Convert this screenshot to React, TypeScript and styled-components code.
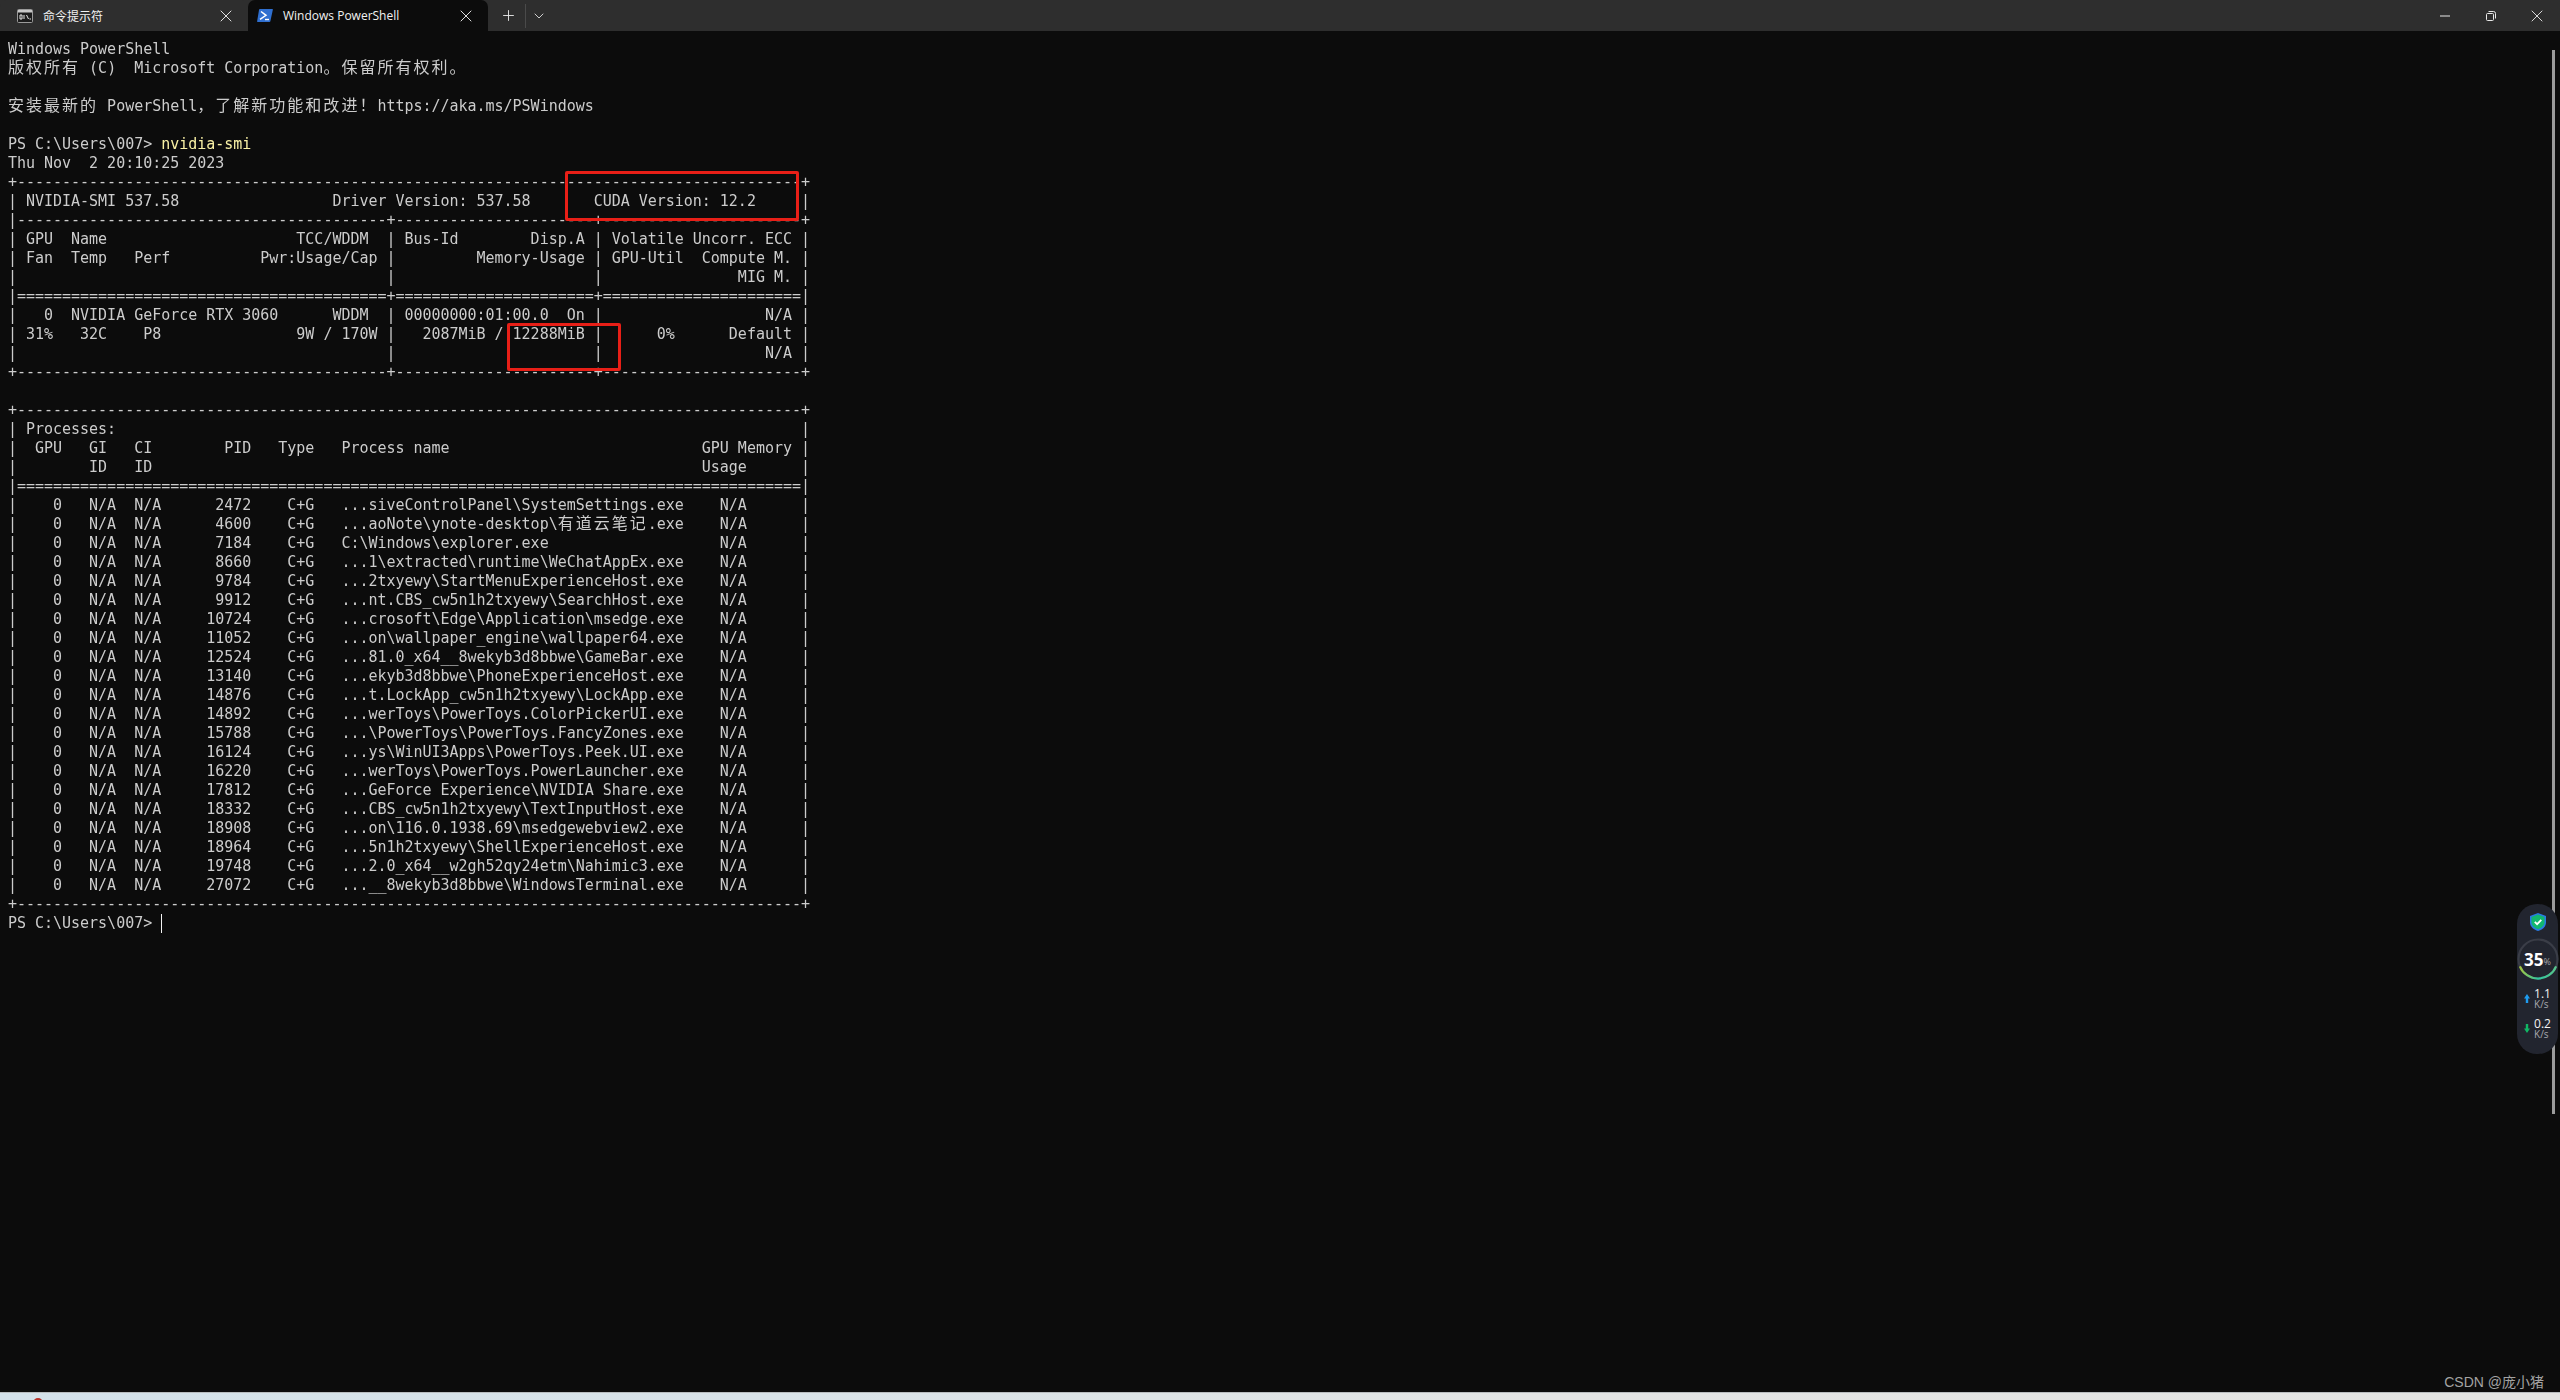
import React from "react";
import styled, { createGlobalStyle } from "styled-components";
import { ChevronDown, Plus, X } from "lucide-react";

const GlobalStyle = createGlobalStyle`
  html, body {
    margin: 0;
    padding: 0;
    background: #0c0c0c;
    overflow: hidden;
  }
`;

const Page = styled.div`
  position: relative;
  width: 2560px;
  height: 1400px;
  display: flex;
  flex-direction: column;
  overflow: hidden;
`;

const TabBar = styled.div`
  height: 31px;
  flex: none;
  display: flex;
  align-items: flex-end;
  background: #2e2e2e;
  font-family: "Open Sans", "Noto Sans CJK SC", sans-serif;
  font-size: 12px;
  color: #f2f2f2;
`;

const Tab = styled.div<{ $active?: boolean }>`
  width: ${(p) => (p.$active ? "240px" : "248px")};
  height: 31px;
  box-sizing: border-box;
  padding: 0 12px 0 ${(p) => (p.$active ? "9px" : "17px")};
  display: flex;
  align-items: center;
  gap: 10px;
  flex: none;
  border-radius: 7px 7px 0 0;
  background: ${(p) => (p.$active ? "#0c0c0c" : "#2e2e2e")};
`;

const TabTitle = styled.span`
  flex: 1;
  white-space: nowrap;
`;

const TabTools = styled.div`
  display: flex;
  align-items: center;
  margin-left: 12px;
  height: 31px;
  color: #e8e8e8;
`;

const ToolDivider = styled.div`
  width: 1px;
  height: 24px;
  margin: 0 5px 0 8px;
  background: #4a4a4a;
`;

const WindowButtons = styled.div`
  margin-left: auto;
  display: flex;
  height: 31px;
  color: #e8e8e8;
`;

const WindowButton = styled.div`
  width: 46px;
  display: flex;
  align-items: center;
  justify-content: center;
`;

const Terminal = styled.pre`
  flex: 1;
  margin: 0;
  padding: 9px 0 0 8px;
  background: #0c0c0c;
  color: #cccccc;
  font-family: "DejaVu Sans Mono", "Noto Sans CJK SC", monospace;
  font-size: 15px;
  line-height: 19px;
  letter-spacing: -0.02px;
  filter: blur(0.35px);
`;

const Line = styled.div`
  height: 19px;
  white-space: pre;
`;

const Wide = styled.span`
  font-family: "Noto Sans CJK SC", sans-serif;
  font-size: 16px;
  line-height: 0;
  letter-spacing: 2.02px;
`;

const Command = styled.span`
  color: #f9f1a5;
`;

const Caret = styled.span`
  display: inline-block;
  width: 1px;
  height: 19px;
  margin-left: 9px;
  vertical-align: top;
  background: #f2f2f2;
`;

const FooterStrip = styled.div`
  height: 8px;
  flex: none;
  position: relative;
  box-sizing: border-box;
  border-top: 1px solid #b9bdbf;
  background: linear-gradient(90deg, #d4e2ea 0%, #d9e3e8 30%, #e3e5e4 60%, #e4e4e2 100%);
`;

const Dot = styled.div`
  position: absolute;
  left: 33px;
  top: 5px;
  width: 10px;
  height: 10px;
  border-radius: 50%;
  background: #b8332b;
`;

const Highlight = styled.div<{ $x: number; $y: number; $w: number; $h: number }>`
  position: absolute;
  left: ${(p) => p.$x}px;
  top: ${(p) => p.$y}px;
  width: ${(p) => p.$w}px;
  height: ${(p) => p.$h}px;
  box-sizing: border-box;
  border: 3px solid #e81f17;
  border-radius: 2px;
`;

const Scrollbar = styled.div`
  position: absolute;
  left: 2552px;
  top: 50px;
  width: 3px;
  height: 1064px;
  background: #9b9b9b;
`;

const Watermark = styled.div`
  position: absolute;
  right: 16px;
  bottom: 9px;
  font-family: "Liberation Sans", "Noto Sans CJK SC", sans-serif;
  font-size: 14px;
  color: #a3a3a3;
`;

const Monitor = styled.div`
  position: absolute;
  left: 2517px;
  top: 904px;
  width: 41px;
  height: 150px;
  box-sizing: border-box;
  padding-top: 9px;
  display: flex;
  flex-direction: column;
  align-items: center;
  border-radius: 20px;
  background: #22252f;
  font-family: "Open Sans", sans-serif;
`;

const Gauge = styled.div`
  position: relative;
  flex: none;
  width: 42px;
  height: 42px;
  margin: 7px 0 3px;
`;

const GaugeLabel = styled.div`
  position: absolute;
  inset: 0;
  display: flex;
  align-items: center;
  justify-content: center;
  color: #fff;
  font-size: 17px;
  font-weight: 700;
  line-height: 1;
  small {
    margin-top: 5px;
    font-size: 9px;
    font-weight: 400;
    color: #a5a8ad;
  }
`;

const Speed = styled.div`
  display: flex;
  align-items: center;
  gap: 4px;
  height: 30px;
`;

const SpeedValue = styled.div`
  color: #f4f4f4;
  font-size: 12px;
  line-height: 10px;
  small {
    display: block;
    margin-top: 1px;
    font-size: 10px;
    line-height: 8px;
    color: #a5a8ad;
  }
`;

type Proc = [string, string];

const processes: Proc[] = [
  ["2472", "...siveControlPanel\\SystemSettings.exe"],
  ["4600", "...aoNote\\ynote-desktop\\有道云笔记.exe"],
  ["7184", "C:\\Windows\\explorer.exe"],
  ["8660", "...1\\extracted\\runtime\\WeChatAppEx.exe"],
  ["9784", "...2txyewy\\StartMenuExperienceHost.exe"],
  ["9912", "...nt.CBS_cw5n1h2txyewy\\SearchHost.exe"],
  ["10724", "...crosoft\\Edge\\Application\\msedge.exe"],
  ["11052", "...on\\wallpaper_engine\\wallpaper64.exe"],
  ["12524", "...81.0_x64__8wekyb3d8bbwe\\GameBar.exe"],
  ["13140", "...ekyb3d8bbwe\\PhoneExperienceHost.exe"],
  ["14876", "...t.LockApp_cw5n1h2txyewy\\LockApp.exe"],
  ["14892", "...werToys\\PowerToys.ColorPickerUI.exe"],
  ["15788", "...\\PowerToys\\PowerToys.FancyZones.exe"],
  ["16124", "...ys\\WinUI3Apps\\PowerToys.Peek.UI.exe"],
  ["16220", "...werToys\\PowerToys.PowerLauncher.exe"],
  ["17812", "...GeForce Experience\\NVIDIA Share.exe"],
  ["18332", "...CBS_cw5n1h2txyewy\\TextInputHost.exe"],
  ["18908", "...on\\116.0.1938.69\\msedgewebview2.exe"],
  ["18964", "...5n1h2txyewy\\ShellExperienceHost.exe"],
  ["19748", "...2.0_x64__w2gh52qy24etm\\Nahimic3.exe"],
  ["27072", "...__8wekyb3d8bbwe\\WindowsTerminal.exe"],
];

const wideRun = /([\u3000-\u30ff\u4e00-\u9fff\uff00-\uffef]+)/;

// nvidia-smi pads by terminal cells, a CJK glyph takes two of them
const cellWidth = (s: string) =>
  s.split(wideRun).reduce((n, part, i) => n + part.length * (i % 2 ? 2 : 1), 0);

const padCells = (s: string, width: number) =>
  s + " ".repeat(Math.max(0, width - cellWidth(s)));

const rule = "+" + "-".repeat(87) + "+";
const split = "+" + "-".repeat(41) + "+" + "-".repeat(22) + "+" + "-".repeat(22) + "+";

const output: string[] = [
  "Windows PowerShell",
  "版权所有 (C)  Microsoft Corporation。保留所有权利。",
  "",
  "安装最新的 PowerShell，了解新功能和改进！https://aka.ms/PSWindows",
  "",
  "PS C:\\Users\\007> ",
  "Thu Nov  2 20:10:25 2023",
  rule,
  "| NVIDIA-SMI 537.58                 Driver Version: 537.58       CUDA Version: 12.2     |",
  "|" + split.slice(1),
  "| GPU  Name" + " ".repeat(21) + "TCC/WDDM  | Bus-Id        Disp.A | Volatile Uncorr. ECC |",
  "| Fan  Temp   Perf" + " ".repeat(10) + "Pwr:Usage/Cap |         Memory-Usage | GPU-Util  Compute M. |",
  "|" + " ".repeat(41) + "|" + " ".repeat(22) + "|               MIG M. |",
  "|" + "=".repeat(41) + "+" + "=".repeat(22) + "+" + "=".repeat(22) + "|",
  "|   0  NVIDIA GeForce RTX 3060      WDDM  | 00000000:01:00.0  On |                  N/A |",
  "| 31%   32C    P8               9W / 170W |   2087MiB / 12288MiB |      0%      Default |",
  "|" + " ".repeat(41) + "|" + " ".repeat(22) + "|                  N/A |",
  split,
  "",
  rule,
  "|" + padCells(" Processes:", 87) + "|",
  "|" + padCells("  GPU   GI   CI        PID   Type   Process name", 76) + "GPU Memory |",
  "|" + padCells("        ID   ID", 76) + "Usage      |",
  "|" + "=".repeat(87) + "|",
  ...processes.map(
    ([pid, name]) =>
      "|    0   N/A  N/A " + pid.padStart(9) + "    C+G   " + padCells(name, 38) + "    N/A      |"
  ),
  rule,
];

const TermText = ({ text }: { text: string }) => (
  <>
    {text.split(wideRun).map((part, i) =>
      i % 2 ? <Wide key={i}>{part}</Wide> : <React.Fragment key={i}>{part}</React.Fragment>
    )}
  </>
);

const CmdIcon = () => (
  <svg width="16" height="14" viewBox="0 0 16 14">
    <rect x="0.5" y="0.5" width="15" height="13" rx="1" fill="#1c1c1c" stroke="#9a9a9a" />
    <rect x="1" y="1" width="14" height="2.5" fill="#c8c8c8" />
    <path d="M3 6h2v4H3zM7 6v4M9.5 6l2 4M12.5 10h1.5" fill="none" stroke="#e6e6e6" strokeWidth="1" />
  </svg>
);

const PowerShellIcon = () => (
  <svg width="16" height="13" viewBox="0 0 16 13">
    <path d="M3 0h12.400a.5.5 0 0 1 .5.6l-2.500 11.500a1 1 0 0 1-1 .9H.6a.5.5 0 0 1-.5-.6L2 .9A1 1 0 0 1 3 0z" fill="#2f6fd0" />
    <path d="M4 2.500l5 3.800-6 4" fill="none" stroke="#fff" strokeWidth="1.500" />
    <path d="M8 10.500h4" stroke="#fff" strokeWidth="1.400" />
  </svg>
);

const MinimizeIcon = () => (
  <svg width="10" height="10" viewBox="0 0 10 10">
    <path d="M0 5h10" stroke="currentColor" />
  </svg>
);

const RestoreIcon = () => (
  <svg width="10" height="10" viewBox="0 0 10 10">
    <rect x="0.5" y="2.500" width="7" height="7" rx="1" fill="none" stroke="currentColor" />
    <path d="M2.500 .5h5a2 2 0 0 1 2 2v5" fill="none" stroke="currentColor" />
  </svg>
);

const ShieldIcon = () => (
  <svg width="16" height="18" viewBox="0 0 16 18">
    <path d="M8 0l8 3v6.500C16 14 12 16.800 8 18 4 16.800 0 14 0 9.500V3z" fill="#2a7be4" />
    <path d="M8 1.500l6.500 2.500v5.300c0 3.500-3.300 5.900-6.500 7-3.200-1.100-6.500-3.500-6.500-7V4z" fill="#12b76f" />
    <path d="M4.800 8.800l2.300 2.300 4.200-4.300" fill="none" stroke="#fff" strokeWidth="1.800" />
  </svg>
);

const GaugeRing = () => (
  <svg width="42" height="42" viewBox="0 0 42 42">
    <defs>
      <linearGradient id="gaugeArc" x1="0" x2="1" y1="0" y2="0">
        <stop offset="0" stopColor="#a4c640" />
        <stop offset="0.5" stopColor="#2fc6a0" />
        <stop offset="1" stopColor="#59c48a" />
      </linearGradient>
    </defs>
    <circle cx="21" cy="21" r="19.500" fill="none" stroke="#3a3d47" strokeWidth="2.200" />
    <path d="M2.900 28.300A19.500 19.500 0 0 0 39.100 28.300" fill="none" stroke="url(#gaugeArc)" strokeWidth="2.200" />
  </svg>
);

const SpeedArrow = ({ up }: { up?: boolean }) => (
  <svg width="6" height="9" viewBox="0 0 6 9">
    <path
      d={up ? "M3 0l3 4.500H4.200V9H1.800V4.500H0z" : "M3 9l3-4.500H4.200V0H1.800v4.500H0z"}
      fill={up ? "#1e9cf0" : "#10b765"}
    />
  </svg>
);

const App = () => {
  return (
    <Page>
      <GlobalStyle />
      <TabBar>
        <Tab>
          <CmdIcon />
          <TabTitle>命令提示符</TabTitle>
          <X size={20} strokeWidth={1.1} />
        </Tab>
        <Tab $active>
          <PowerShellIcon />
          <TabTitle>Windows PowerShell</TabTitle>
          <X size={20} strokeWidth={1.1} />
        </Tab>
        <TabTools>
          <Plus size={17} strokeWidth={1.3} />
          <ToolDivider />
          <ChevronDown size={16} strokeWidth={1.3} />
        </TabTools>
        <WindowButtons>
          <WindowButton>
            <MinimizeIcon />
          </WindowButton>
          <WindowButton>
            <RestoreIcon />
          </WindowButton>
          <WindowButton>
            <X size={20} strokeWidth={1.1} />
          </WindowButton>
        </WindowButtons>
      </TabBar>
      <Terminal>
        {output.map((text, i) => (
          <Line key={i}>
            <TermText text={text} />
            {i === 5 && <Command>nvidia-smi</Command>}
          </Line>
        ))}
        <Line>
          PS C:\Users\007&gt;
          <Caret />
        </Line>
      </Terminal>
      <FooterStrip>
        <Dot />
      </FooterStrip>
      <Highlight $x={565} $y={171} $w={234} $h={50} />
      <Highlight $x={507} $y={323} $w={114} $h={48} />
      <Scrollbar />
      <Monitor>
        <ShieldIcon />
        <Gauge>
          <GaugeRing />
          <GaugeLabel>
            35<small>%</small>
          </GaugeLabel>
        </Gauge>
        <Speed>
          <SpeedArrow up />
          <SpeedValue>
            1.1<small>K/s</small>
          </SpeedValue>
        </Speed>
        <Speed>
          <SpeedArrow />
          <SpeedValue>
            0.2<small>K/s</small>
          </SpeedValue>
        </Speed>
      </Monitor>
      <Watermark>CSDN @庞小猪</Watermark>
    </Page>
  );
};

export default App;
